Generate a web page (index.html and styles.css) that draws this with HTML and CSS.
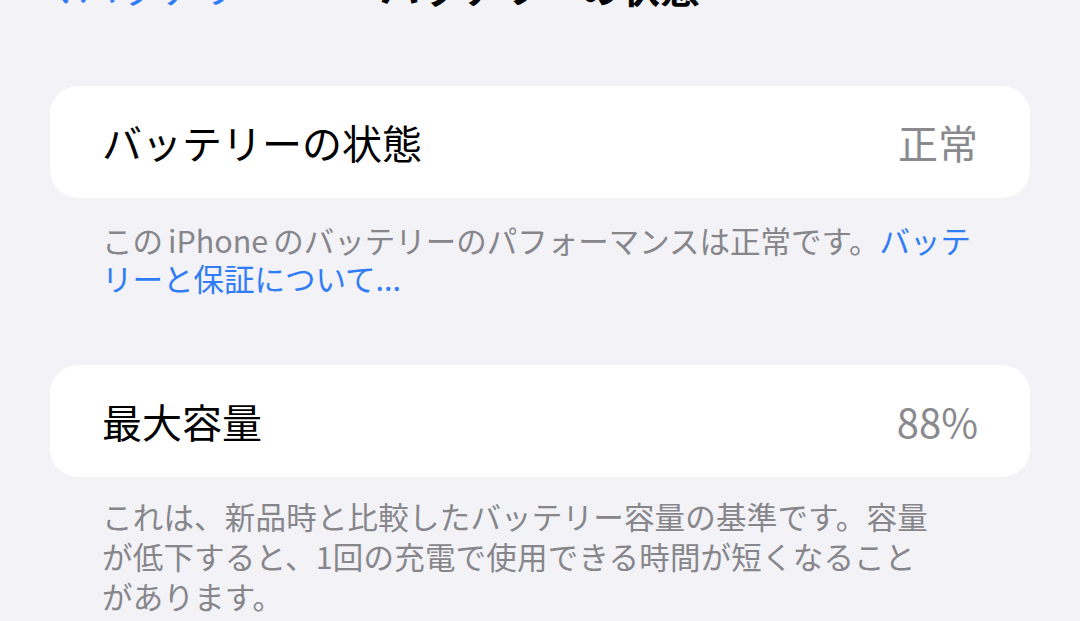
FILE: index.html
```html
<!DOCTYPE html>
<html lang="ja">
<head>
<meta charset="utf-8">
<link rel="stylesheet" href="styles.css">
</head>
<body>
<div class="page">
  <div class="nav">
    <span class="back"><svg class="chev" viewBox="0 0 20 36" width="20" height="36"><path d="M16 3 L4 18 L16 33" fill="none" stroke="#2f7cf6" stroke-width="4.5" stroke-linecap="round" stroke-linejoin="round"/></svg><span class="back-text">バッテリー</span></span>
    <span class="title">バッテリーの状態</span>
  </div>
  <div class="card first">
    <span class="label">バッテリーの状態</span>
    <span class="value">正常</span>
  </div>
  <p class="footer">この<span class="latin">iPhone</span>のバッテリーのパフォーマンスは正常です。<a class="link">バッテ<br>リーと保証について...</a></p>
  <div class="card second">
    <span class="label">最大容量</span>
    <span class="value">88%</span>
  </div>
  <p class="footer two">これは、新品時と比較したバッテリー容量の基準です。容量<br>が低下すると、1回の充電で使用できる時間が短くなること<br>があります。</p>
</div>
</body>
</html>
```
FILE: styles.css
```css
html, body {
  margin: 0;
  padding: 0;
  background: #f2f2f7;
}
body {
  font-family: "Noto Sans CJK JP", "Noto Sans", sans-serif;
  width: 1080px;
  height: 621px;
  overflow: hidden;
}
.page {
  padding: 0 50px;
}
.nav {
  position: relative;
  height: 44px;
  margin-top: -36px;
  display: flex;
  align-items: center;
  font-size: 40px;
  line-height: 44px;
}
.back {
  display: flex;
  align-items: center;
  color: #2f7cf6;
}
.chev {
  margin-right: 8px;
}
.title {
  position: absolute;
  left: 0;
  right: 0;
  text-align: center;
  font-weight: 700;
  color: #000;
}
.card {
  background: #fff;
  border-radius: 28px;
  height: 112px;
  padding: 0 52px;
  display: flex;
  align-items: center;
  justify-content: space-between;
  font-size: 40px;
}
.card.first {
  margin-top: 78px;
}
.card.second {
  margin-top: 68px;
}
.label {
  color: #000;
}
.value {
  color: #8a8a8e;
}
.footer {
  margin: 23px 0 0;
  padding: 0 52px;
  font-size: 30.5px;
  line-height: 38px;
  color: #86868b;
}
.footer.two {
  margin-top: 19px;
  line-height: 40px;
  letter-spacing: 0.2px;
}
.latin {
  margin: 0 5px;
}
.link {
  color: #2f7cf6;
}
```
